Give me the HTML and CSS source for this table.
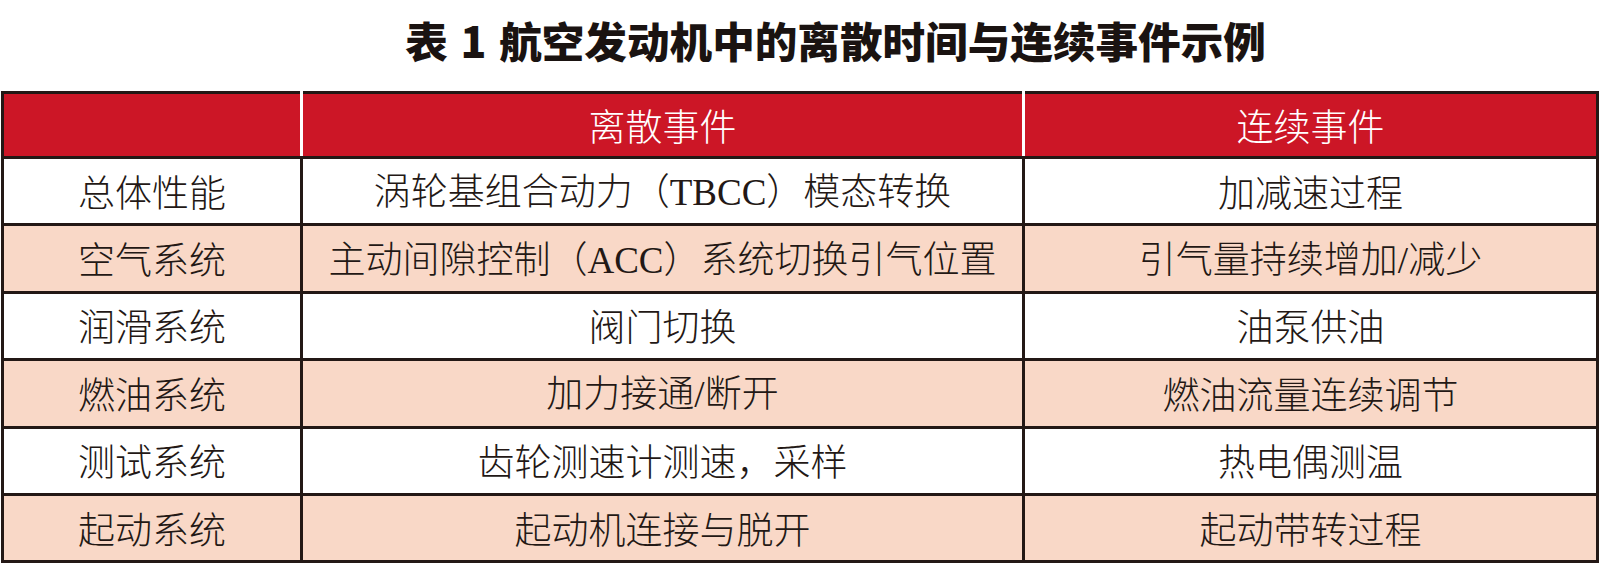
FILE: index.html
```html
<!DOCTYPE html>
<html lang="zh-CN">
<head>
<meta charset="utf-8">
<title>表 1 航空发动机中的离散时间与连续事件示例</title>
<link rel="stylesheet" href="styles.css">
</head>
<body>
<h1 class="title">表 1 航空发动机中的离散时间与连续事件示例</h1>
<table class="events">
  <colgroup>
    <col class="c1">
    <col class="c2">
    <col class="c3">
  </colgroup>
  <thead>
    <tr>
      <th></th>
      <th>离散事件</th>
      <th>连续事件</th>
    </tr>
  </thead>
  <tbody>
    <tr class="odd">
      <td>总体性能</td>
      <td>涡轮基组合动力（<span class="lat">TBCC</span>）模态转换</td>
      <td>加减速过程</td>
    </tr>
    <tr class="even">
      <td>空气系统</td>
      <td>主动间隙控制（<span class="lat">ACC</span>）系统切换引气位置</td>
      <td>引气量持续增加<span class="lat">/</span>减少</td>
    </tr>
    <tr class="odd">
      <td>润滑系统</td>
      <td>阀门切换</td>
      <td>油泵供油</td>
    </tr>
    <tr class="even">
      <td>燃油系统</td>
      <td>加力接通<span class="lat">/</span>断开</td>
      <td>燃油流量连续调节</td>
    </tr>
    <tr class="odd">
      <td>测试系统</td>
      <td>齿轮测速计测速，采样</td>
      <td>热电偶测温</td>
    </tr>
    <tr class="even">
      <td>起动系统</td>
      <td>起动机连接与脱开</td>
      <td>起动带转过程</td>
    </tr>
  </tbody>
</table>
</body>
</html>
```

FILE: styles.css
```css
html, body {
  margin: 0;
  padding: 0;
  background: #ffffff;
}

body {
  width: 1600px;
  height: 566px;
  overflow: hidden;
  font-family: "Noto Sans CJK SC", "Noto Sans", sans-serif;
  color: #231815;
}

.title {
  margin: 18px 0 0 71px;
  text-align: center;
  font-size: 42.6px;
  line-height: 43px;
  height: 43px;
  font-weight: 900;
  word-spacing: 3px;
  color: #1a1311;
}

.events {
  margin: 30px 0 0 1px;
  border-collapse: collapse;
  table-layout: fixed;
  width: 1595px;
  border: 3px solid #231815;
  font-size: 37px;
  font-weight: 300;
}

.c1 { width: 299px; }
.c2 { width: 722px; }
.c3 { width: 574px; }

.events th,
.events td {
  border: 3px solid #231815;
  padding: 0;
  text-align: center;
  vertical-align: middle;
  line-height: 1;
  white-space: nowrap;
}

.events th {
  background: #cc1626;
  color: #ffffff;
  font-weight: 300;
  height: 62px;
  border-left-color: #ffffff;
  border-right-color: #ffffff;
}

.events th:first-child {
  border-left-color: #231815;
}

.events th:last-child {
  border-right-color: #231815;
}

.events td {
  height: 64.4px;
}

.odd td {
  background: #ffffff;
}

.even td {
  background: #f9d8c7;
}

.lat {
  font-family: "Liberation Serif", serif;
  font-weight: 400;
}
```
